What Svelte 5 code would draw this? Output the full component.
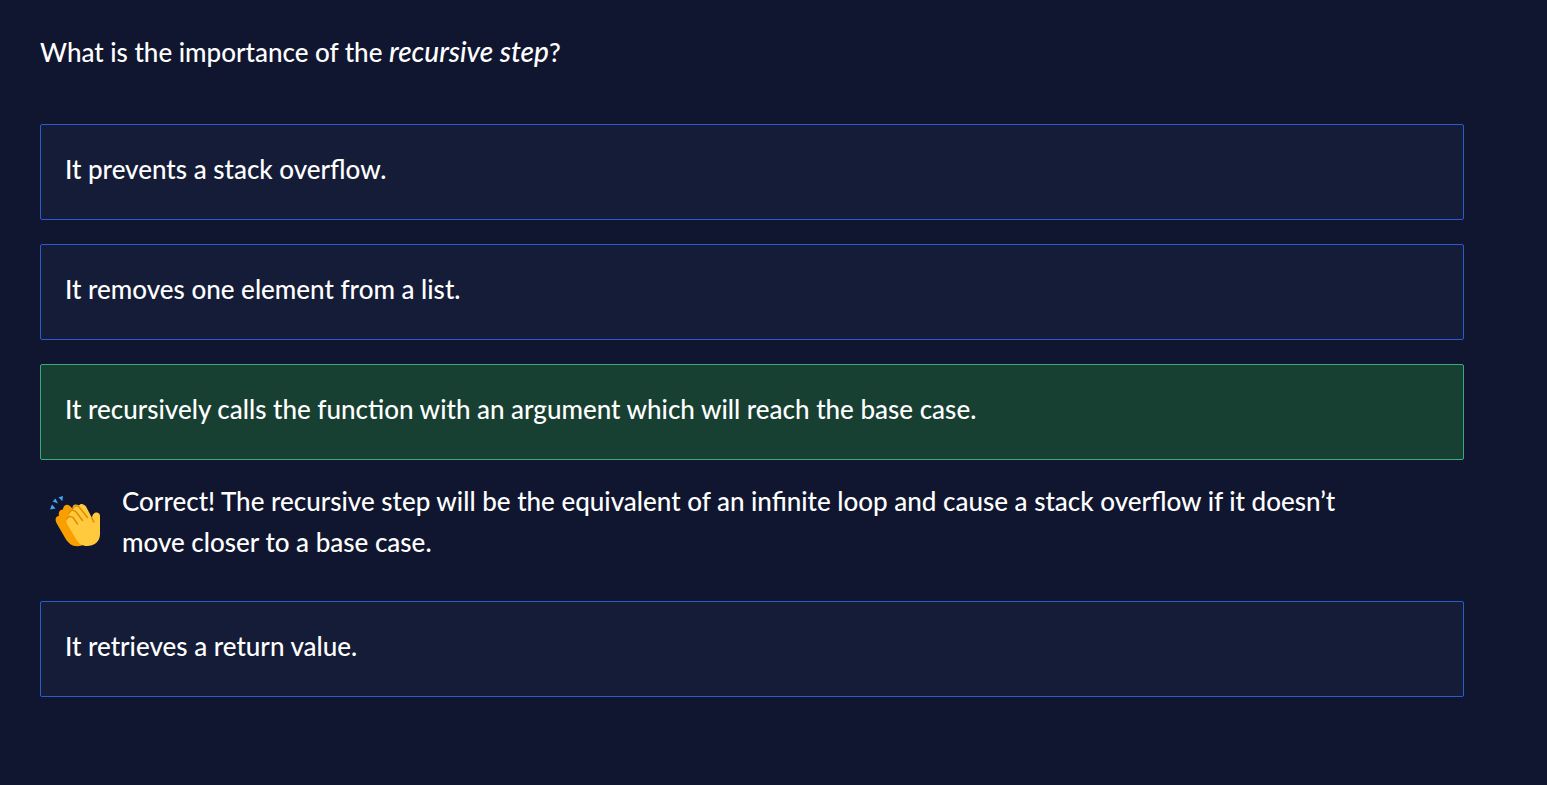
<script>
  let selected = $state(2);
  const answers = [
    'It prevents a stack overflow.',
    'It removes one element from a list.',
    'It recursively calls the function with an argument which will reach the base case.',
    'It retrieves a return value.'
  ];
</script>

<main>
  <h1>What is the importance of the <em>recursive step</em>?</h1>
  <div class="answers">
    {#each answers as answer, i}
      <button type="button" class:correct={selected === i} onclick={() => (selected = i)}>{answer}</button>
      {#if i === 2}
        <div class="feedback">
          <svg viewBox="0 0 52 52" aria-hidden="true">
            <path fill="#42a5f5" d="M2 8.500l3.500 4L0 13.500zM5.500 2.500L8 7.500 2.700 5.500zM8.500 1.300L13 0l-.7 5.300z" />
            <path fill="#f9a000" d="M6.500 27C4.500 23 6 20 9 20c-1-4 1-6.500 4-6.500C13 10 16 7 20 10L40 32l-8 17.500c-8 2-12-.5-16-6z" />
            <path fill="#ffca3e" d="M17 28c-1.500-4 0-7 3-7-2-5 0-7.500 3-7.500C21.500 9 25 7 29 9.500c1-2.500 5-2 7 1L42 22c0-5 5-7 7-4.500 1 1 1 2 1 4V38c0 8-6 12-13 12-5 0-8-2-11-7z" />
            <g fill="none" stroke="#e58a00" stroke-width="1.500" stroke-linecap="round">
              <path d="M16.500 23c2-3 5-3 7-1l4 6M19 17c2-4 6-3 8 0l5.500 7.500M23 12c2-3 5-3 7 0l7.500 9.500M42 22c.5 1.500 1 3 2 4" />
            </g>
          </svg>
          <p>Correct! The recursive step will be the equivalent of an infinite loop and cause a stack overflow if it doesn’t move closer to a base case.</p>
        </div>
      {/if}
    {/each}
  </div>
</main>

<style>
  :global(body) { margin: 0; background: #10162f; }
  main { padding: 32px 83px 88px 40px; color: #fff; font: 500 26px/41px Lato, sans-serif; }
  h1 { margin: 0 0 51px; font: inherit; }
  em { font-size: 28px; line-height: 1; }
  .answers { display: flex; flex-direction: column; gap: 24px; }
  button { width: 100%; min-height: 96px; padding: 24px 24px 29px; border: 1px solid #2a5bd0; border-radius: 2px; background: #151c38; color: inherit; font: inherit; text-align: left; cursor: pointer; }
  button.correct { background: #174032; border-color: #3aa981; }
  .feedback { display: flex; gap: 20px; margin-top: -3px; padding: 0 72px 14px 10px; }
  svg { width: 52px; height: 52px; flex: none; margin-top: 15px; }
  p { margin: 0; }
</style>
